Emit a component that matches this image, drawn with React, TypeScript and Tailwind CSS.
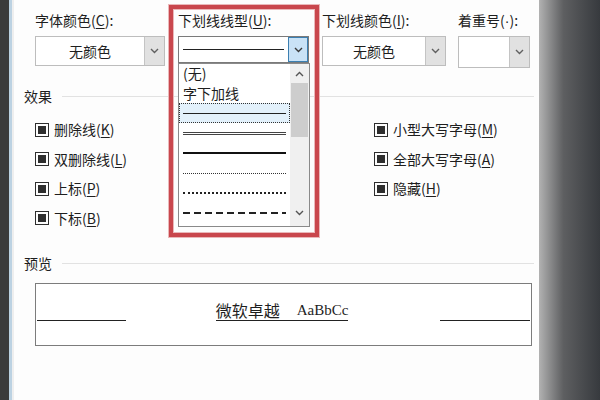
import React from "react";

const font = { fontFamily: '"Noto Sans CJK SC", "Noto Sans", sans-serif' };

function Chevron({ up = false, color = "#606060" }: { up?: boolean; color?: string }) {
  return (
    <svg width="9" height="6" viewBox="0 0 9 6">
      <polyline
        points={up ? "1,5 4.5,1.5 8,5" : "1,1 4.5,4.5 8,1"}
        fill="none"
        stroke={color}
        strokeWidth="1.4"
      />
    </svg>
  );
}

function Combo({ text, w, h = 30 }: { text?: string; w: string; h?: number }) {
  return (
    <div className={`${w} flex border border-[#bdbdbd] bg-white`} style={{ height: h }}>
      <div className="flex-1 flex items-center justify-center text-[14px] text-[#1e1e1e]">{text}</div>
      <div className="w-[20px] bg-[#e1e1e1] border-l border-[#c4c4c4] flex items-center justify-center">
        <Chevron />
      </div>
    </div>
  );
}

function Label({ text, k, plain = false }: { text: string; k: string; plain?: boolean }) {
  return (
    <div className="h-[18px] leading-[18px] mb-[7px] text-[14px] text-[#1e1e1e] whitespace-nowrap">
      {text}(
      <span
        className={plain ? "" : "underline underline-offset-2"}
        style={plain ? { fontFamily: '"Liberation Sans", sans-serif' } : undefined}
      >
        {k}
      </span>
      ):
    </div>
  );
}

function GroupHeader({ title }: { title: string }) {
  return (
    <div className="flex items-center h-[18px] pl-[10px] pr-[5px]">
      <span className="text-[14px] leading-[18px] text-[#1e1e1e]">{title}</span>
      <div className="flex-1 h-px bg-[#e2e2e2] ml-[10px]" />
    </div>
  );
}

function Check({ text, k }: { text: string; k: string }) {
  return (
    <div className="h-[29.5px] flex items-center gap-[5px]">
      <div className="w-[14px] h-[14px] border-[1.5px] border-[#2e2e2e] flex items-center justify-center">
        <div className="w-[8px] h-[8px] bg-[#2e2e2e]" />
      </div>
      <span className="text-[14px] text-[#1e1e1e] whitespace-nowrap">
        {text}(<span className="underline underline-offset-2">{k}</span>)
      </span>
    </div>
  );
}

export default function App() {
  return (
    <div className="relative w-[600px] h-[400px] flex overflow-hidden bg-white" style={font}>
      <div className="w-[9px] bg-[#3b3b3b]" />
      <div className="w-[3px] bg-[#bcd2e2]" />
      <div className="w-[2px] bg-[#eeeeee]" />

      <div className="flex-1 bg-[#fdfdfd]">
        <div className="h-[68px] pt-[11px] pl-[21px] flex gap-[13px]">
          <div>
            <Label text="字体颜色" k="C" />
            <Combo text="无颜色" w="w-[130px]" />
          </div>
          <div>
            <Label text="下划线线型" k="U" />
            <div className="w-[131px] h-[27px] flex border border-[#7a7a7a] bg-white">
              <div className="flex-1 flex items-center px-[4px]">
                <div className="w-full h-px bg-[#222]" />
              </div>
              <div className="w-[20px] bg-[#c9e2f6] border border-[#3c7fb1] flex items-center justify-center">
                <Chevron color="#3a3a3a" />
              </div>
            </div>
          </div>
          <div>
            <Label text="下划线颜色" k="I" />
            <Combo text="无颜色" w="w-[124px]" />
          </div>
          <div className="ml-[-1px]">
            <Label text="着重号" k="·" plain />
            <Combo w="w-[72px]" h={32} />
          </div>
        </div>

        <div className="mt-[19px]">
          <GroupHeader title="效果" />
        </div>

        <div className="mt-[10px] pl-[21px] flex">
          <div className="w-[339px]">
            <Check text="删除线" k="K" />
            <Check text="双删除线" k="L" />
            <Check text="上标" k="P" />
            <Check text="下标" k="B" />
          </div>
          <div>
            <Check text="小型大写字母" k="M" />
            <Check text="全部大写字母" k="A" />
            <Check text="隐藏" k="H" />
          </div>
        </div>

        <div className="mt-[21px]">
          <GroupHeader title="预览" />
        </div>

        <div className="mt-[11px] ml-[21px] w-[497px] h-[63px] border border-[#7c7c7c] bg-white">
          <div className="h-[37px] flex items-end justify-between px-[1px]">
            <div className="w-[89px] h-px bg-[#222]" />
            <div className="flex items-end border-b border-[#222] leading-[20px] text-[#1e1e1e] mr-[2px]">
              <span className="text-[16px]">微软卓越</span>
              <span className="ml-[17px] text-[15px]" style={{ fontFamily: '"Liberation Serif", serif' }}>AaBbCc</span>
            </div>
            <div className="w-[90px] h-px bg-[#222]" />
          </div>
        </div>
      </div>

      <div className="w-[61px] bg-linear-to-r from-[#b2b2b2] via-[#5e5f61] via-40% to-[#373a3e]" />

      {/* open dropdown list */}
      <div className="absolute left-[178px] top-[63px] w-[132px] h-[164px] border border-[#8a8a8a] bg-white flex">
        <div className="flex-1 text-[14px] text-[#1e1e1e]">
          <div className="h-[19.5px] leading-[19.5px] pl-[4px]">(无)</div>
          <div className="h-[19.5px] leading-[19.5px] pl-[4px]">字下加线</div>
          <div className="h-[20px] flex items-center px-[3px] bg-[#e3f1fb] border border-dotted border-[#333]">
            <div className="w-full h-px bg-[#222]" />
          </div>
          <div className="h-[20px] flex flex-col justify-center gap-[1px] px-[4px]">
            <div className="w-full h-px bg-[#444]" />
            <div className="w-full h-px bg-[#444]" />
          </div>
          <div className="h-[20px] flex items-center px-[4px]">
            <div className="w-full h-[2.5px] bg-[#111]" />
          </div>
          <div className="h-[20px] flex items-center px-[4px]">
            <div className="w-full border-t border-dotted border-[#333]" />
          </div>
          <div className="h-[20px] flex items-center px-[4px]">
            <div className="w-full border-t-2 border-dotted border-[#222]" />
          </div>
          <div className="h-[20px] flex items-center px-[4px]">
            <div className="w-full h-[1.5px] bg-[repeating-linear-gradient(90deg,#222_0_7px,transparent_7px_11px)]" />
          </div>
        </div>
        <div className="w-[19px] bg-[#f0f0f0] flex flex-col items-center">
          <div className="h-[19px] w-full flex items-center justify-center">
            <Chevron up color="#555" />
          </div>
          <div className="w-[17px] h-[54px] bg-[#cdcdcd]" />
          <div className="flex-1" />
          <div className="h-[19px] w-full flex items-center justify-center mb-[4px]">
            <Chevron color="#555" />
          </div>
        </div>
      </div>

      {/* red highlight frame */}
      <div className="absolute left-[169px] top-[5px] w-[150px] h-[232px] border-[4px] border-[#c9474d] shadow-[0_0_0_1px_#eab8ba,inset_0_0_0_1px_#eab8ba]" />
    </div>
  );
}
